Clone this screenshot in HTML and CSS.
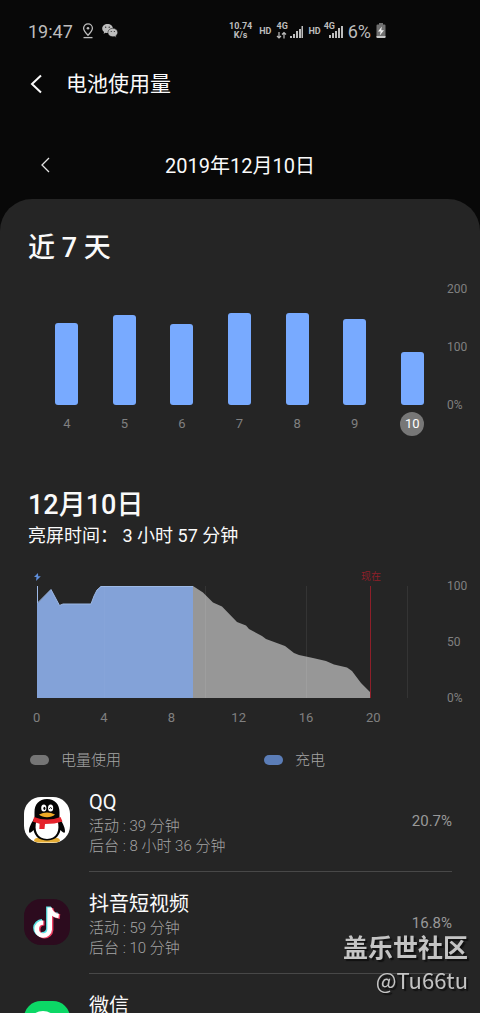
FILE: index.html
```
<!DOCTYPE html>
<html lang="zh-CN">
<head>
    <meta charset="UTF-8">
    <meta name="viewport" content="width=device-width, initial-scale=1.0">
    <title>电池使用量</title>
    <link rel="stylesheet" href="styles.css">
</head>
<body>
    <!-- Status bar -->
    <div class="status-bar">
        <span class="clock">19:47</span>
        <svg class="status-pin" width="12" height="16" viewBox="0 0 12 16" fill="none" stroke="#bdbdbd" stroke-width="1.3">
            <path d="M6 12.2C3.5 9.6 1.6 7.6 1.6 5.2a4.4 4.4 0 0 1 8.8 0c0 2.4-1.9 4.400-4.400 7z"/>
            <circle cx="6" cy="5.200" r="1.300" fill="#bdbdbd" stroke="none"/>
            <path d="M1.500 14.600h9"/>
        </svg>
        <svg class="status-wechat" width="16" height="14" viewBox="0 0 16 14">
            <path fill="#bdbdbd" d="M5.500 0C2.500 0 .2 2 .2 4.500c0 1.400.7 2.600 1.900 3.400L1.600 9.700l2.100-1c.6.200 1.200.2 1.800.2 3 0 5.400-2 5.400-4.500S8.500 0 5.500 0z"/>
            <path fill="#bdbdbd" stroke="#080808" stroke-width=".5" d="M10.800 4.300c-2.800 0-4.900 1.900-4.900 4.200s2.100 4.200 4.900 4.200c.6 0 1.100-.1 1.600-.2l1.900 1-.5-1.700c1.100-.8 1.900-1.900 1.900-3.300 0-2.300-2.200-4.200-4.900-4.200z"/>
            <g fill="#080808"><circle cx="3.700" cy="3.200" r=".6"/><circle cx="7.200" cy="3.200" r=".6"/><circle cx="9.200" cy="7.500" r=".5"/><circle cx="12.300" cy="7.500" r=".5"/></g>
        </svg>
        <div class="status-right">
            <span class="net-speed">10.74<br>K/s</span>
            <span class="hd">HD</span>
            <span class="signal">
                <span class="net-type">4G</span>
                <svg width="27" height="16" viewBox="0 0 27 16" stroke="#bdbdbd" fill="none">
                    <path stroke-width="1.200" d="M3 9v6M1 13l2 2 2-2M8 15.500v-6M6 11.500l2-2 2 2"/>
                    <path stroke-width="2" d="M15 15v-2M18 15v-4M21 15v-7M24 15v-9M26.500 15v-12"/>
                </svg>
            </span>
            <span class="hd">HD</span>
            <span class="signal signal-narrow">
                <span class="net-type">4G</span>
                <svg width="17" height="16" viewBox="0 0 17 16" stroke="#bdbdbd" fill="none" stroke-width="2">
                    <path d="M4 15v-3M7 15v-5M10 15v-7M13 15v-10M16 15v-12"/>
                </svg>
            </span>
            <span class="battery-level">6%</span>
            <svg width="10" height="16" viewBox="0 0 10 16">
                <path fill="#707070" d="M3 0h4v1.500h1.500q1 0 1 1V14q0 1-1 1h-7q-1 0-1-1V2.500q0-1 1-1H3z"/>
                <path fill="#c8c8c8" d="M.5 13h9v1q0 1-1 1h-7q-1 0-1-1z"/>
                <path fill="#f0f0f0" d="M5.800 3.500L2 8.600h2.600l-.8 3.900L8 7.200H5.300z"/>
            </svg>
        </div>
    </div>

    <header class="app-bar">
        <button class="icon-btn" aria-label="返回">
            <svg width="12" height="20" viewBox="0 0 12 20" fill="none" stroke="#fafafa" stroke-width="2"><path d="M11 1.500L2 10l9 8.500"/></svg>
        </button>
        <h1>电池使用量</h1>
    </header>

    <nav class="date-nav">
        <button class="icon-btn" aria-label="前一天">
            <svg width="9" height="16" viewBox="0 0 9 16" fill="none" stroke="#e4e4e4" stroke-width="1.300"><path d="M8 1L1 8l7 7"/></svg>
        </button>
        <span>2019年12月10日</span>
    </nav>

    <main class="card">
        <h2>近 7 天</h2>

        <!-- Last 7 days -->
        <div class="week-chart">
            <div class="days">
                <div class="day"><div class="bar-area"><div class="bar" style="height: 71%"></div></div><span>4</span></div>
                <div class="day"><div class="bar-area"><div class="bar" style="height: 78%"></div></div><span>5</span></div>
                <div class="day"><div class="bar-area"><div class="bar" style="height: 70%"></div></div><span>6</span></div>
                <div class="day"><div class="bar-area"><div class="bar" style="height: 79%"></div></div><span>7</span></div>
                <div class="day"><div class="bar-area"><div class="bar" style="height: 79%"></div></div><span>8</span></div>
                <div class="day"><div class="bar-area"><div class="bar" style="height: 74%"></div></div><span>9</span></div>
                <div class="day selected"><div class="bar-area"><div class="bar" style="height: 46%"></div></div><span>10</span></div>
            </div>
            <div class="y-axis"><span>200</span><span>100</span><span>0%</span></div>
        </div>

        <h2 class="day-title">12月10日</h2>
        <p class="screen-time">亮屏时间： 3 小时 57 分钟</p>

        <!-- Battery level through the day -->
        <div class="level-chart">
            <div class="plot">
                <svg class="area" viewBox="0 0 371 112" preserveAspectRatio="none">
                    <path fill="#83a2d8" d="M0 112V0h1v17L14 3.500l8.500 16L26 18h28l3-8 3-6 4-4h92v112z"/>
                    <path fill="#979797" d="M156 112V0l10 6.500 10 10 9 4L200 36l9 3.500 3 3.500 13 7 4 3 19 7 9 7 5 2 14 3 13 3 8 3.500 13 3 5 3.500 9 12 9 9v6z"/>
                    <path fill="none" stroke="#9db9e6" d="M.5 0v17L14 3.500l8.500 16L26 18h28l3-8 3-6 4-3.500h92"/>
                    <path fill="none" stroke="#fff" stroke-opacity=".03" d="M67.500 0v112"/>
                    <path fill="none" stroke="#fff" stroke-opacity=".07" d="M168.500 0v112M269.500 0v112M370.500 0v112"/>
                    <path fill="none" stroke="#8e1f29" d="M333.500 0v112"/>
                </svg>
                <svg class="bolt" width="7" height="8" viewBox="0 0 7 8"><path fill="#5f8fdc" d="M4 0L0 4h2.500L2 8l4.800-4.700H4.200z"/></svg>
                <span class="now">现在</span>
            </div>
            <div class="y-axis"><span>100</span><span>50</span><span>0%</span></div>
        </div>
        <div class="hours"><span>0</span><span>4</span><span>8</span><span>12</span><span>16</span><span>20</span></div>

        <div class="legend">
            <span class="legend-item"><i class="pill"></i>电量使用</span>
            <span class="legend-item"><i class="pill charging"></i>充电</span>
        </div>

        <!-- App list -->
        <ul class="apps">
            <li>
                <svg class="app-icon" viewBox="0 0 46 46">
                    <rect width="46" height="46" rx="17" fill="#fff"/>
                    <path fill="#e5ad35" d="M10 43.500q0-3 7-3h12q7 0 7 3 0 2-8 2H18q-8 0-8-2z"/>
                    <path fill="#050505" d="M23 2c-8 0-12.500 5.500-12.500 13v6C8 25 5 30 5 34c0 2.500 1.500 2.500 4.500-1C11 40 16 43.500 23 43.500S35 40 36.500 33c3 3.500 4.500 3.500 4.500 1 0-4-3-9-5.500-13v-6C35.500 7.500 31 2 23 2z"/>
                    <path fill="#fff" d="M12.500 24h21c3 9-1 18-10.500 18S9.500 33 12.500 24z"/>
                    <ellipse cx="19.800" cy="11" rx="2.600" ry="3.600" fill="#fff"/><ellipse cx="26.600" cy="11" rx="2.600" ry="3.600" fill="#fff"/>
                    <ellipse cx="20.400" cy="11.300" rx="1" ry="1.600"/><path fill="none" stroke="#000" d="M25.200 11.700q1.400-2.200 2.800 0"/>
                    <path fill="#eeaa26" d="M15 17.500q8-4 16 0-3 2.800-8 2.800t-8-2.800z"/>
                    <path fill="#e5222b" d="M10 20q13 5 26.500 0l2 4.500Q31 27 21 27l-.5 5h-5.200l.3-5.300-6.600-2z"/>
                </svg>
                <div class="app-text">
                    <h3>QQ</h3>
                    <p>活动 : 39 分钟</p>
                    <p>后台 : 8 小时 36 分钟</p>
                </div>
                <span class="percent">20.7%</span>
            </li>
            <li>
                <svg class="app-icon" viewBox="0 0 46 46">
                    <rect width="46" height="46" rx="17" fill="#2c0b1e"/>
                    <g fill="none" stroke-width="4.800">
                        <path stroke="#5be3e5" d="M24.500 7.500v22a6.500 6.500 0 1 1-6.500-7M24.500 8.500c1 4 4 7 9 7.500"/>
                        <path stroke="#ef3f62" d="M27 9v22a6.500 6.500 0 1 1-6.500-7M27 10c1 4 4 7 9 7.500"/>
                        <path stroke="#fff" stroke-width="4.600" d="M25.700 8.500v22a6.500 6.500 0 1 1-6.500-7M25.700 9.500c1 4 4 7 9 7.500"/>
                    </g>
                </svg>
                <div class="app-text">
                    <h3>抖音短视频</h3>
                    <p>活动 : 59 分钟</p>
                    <p>后台 : 10 分钟</p>
                </div>
                <span class="percent">16.8%</span>
            </li>
            <li>
                <svg class="app-icon" viewBox="0 0 46 46">
                    <rect width="46" height="46" rx="17" fill="#0cd866"/>
                    <ellipse cx="19" cy="19" rx="12" ry="9" fill="#fff"/>
                    <ellipse cx="29" cy="27" rx="10" ry="8" fill="#fff"/>
                </svg>
                <div class="app-text">
                    <h3>微信</h3>
                </div>
            </li>
        </ul>
    </main>

    <div class="watermark"><strong>盖乐世社区</strong><span>@Tu66tu</span></div>
</body>
</html>
```
FILE: styles.css
```
* {
    box-sizing: border-box;
}
body {
    margin: 0;
    height: 100vh;
    overflow: hidden;
    display: flex;
    flex-direction: column;
    background-color: #080808;
    color: #fafafa;
    font-family: Roboto, "Noto Sans CJK SC", sans-serif;
}
h1, h2, h3, p, ul {
    margin: 0;
    padding: 0;
    font-weight: 400;
}
svg {
    display: block;
    flex: none;
}
.status-bar {
    flex: none;
    display: flex;
    align-items: center;
    height: 62px;
    padding: 0 94px 0 28px;
    color: #bdbdbd;
}
.clock, .battery-level {
    font-size: 18px;
}
.status-pin {
    margin-left: 9px;
}
.status-wechat {
    margin-left: 8px;
}
.status-right {
    display: flex;
    align-items: center;
    gap: 5px;
    margin-left: auto;
}
.net-speed {
    margin-right: 2px;
    font-size: 9px;
    line-height: 9px;
    font-weight: 700;
    text-align: center;
}
.hd {
    font-size: 9px;
    font-weight: 700;
}
.signal {
    position: relative;
}
.net-type {
    position: absolute;
    top: -2px;
    left: 0;
    font-size: 9px;
    line-height: 10px;
    font-weight: 700;
}
.signal-narrow .net-type {
    left: -2px;
}
.app-bar {
    flex: none;
    display: flex;
    align-items: center;
    gap: 24px;
    height: 44px;
    padding-left: 30px;
}
.app-bar h1 {
    font-size: 21px;
    line-height: 24px;
}
.icon-btn {
    padding: 0;
    border: none;
    background: none;
    cursor: pointer;
}
.date-nav {
    flex: none;
    display: grid;
    grid-template-columns: 60px 1fr 60px;
    align-items: center;
    height: 69px;
    margin-top: 24px;
    font-size: 20px;
    text-align: center;
}
.date-nav .icon-btn {
    justify-self: end;
    margin-right: 10px;
}
.card {
    flex: 1 0 auto;
    padding-top: 30px;
    border-radius: 32px 32px 0 0;
    background-color: #252525;
}
.card h2 {
    padding-left: 28px;
    font-size: 27px;
    line-height: 38px;
    font-weight: 500;
}
.week-chart {
    display: flex;
    margin-top: 22px;
}
.days {
    flex: 1;
    display: flex;
    padding: 0 6px 0 38px;
}
.day {
    flex: 1;
    display: flex;
    flex-direction: column;
    align-items: center;
    gap: 7px;
    color: #808080;
    font-size: 13px;
    line-height: 24px;
}
.bar-area {
    display: flex;
    align-items: flex-end;
    height: 116px;
}
.bar {
    width: 23px;
    border-radius: 3px;
    background-color: #78aaff;
}
.day span {
    width: 24px;
    border-radius: 50%;
    text-align: center;
}
.day.selected span {
    background-color: #777;
    color: #fff;
}
.y-axis {
    flex: none;
    display: flex;
    flex-direction: column;
    justify-content: space-between;
    width: 33px;
    height: 132px;
    margin: -8px 0;
    color: #808080;
    font-size: 12px;
    line-height: 16px;
}
.card .day-title {
    margin-top: 50px;
}
.screen-time {
    padding-left: 28px;
    font-size: 18px;
    line-height: 24px;
}
.level-chart {
    display: flex;
    margin-top: 38px;
}
.level-chart .y-axis {
    height: 128px;
}
.plot {
    position: relative;
    flex: 1;
    height: 112px;
    margin: 0 39px 0 37px;
}
.area {
    width: 100%;
    height: 100%;
}
.bolt {
    position: absolute;
    top: -13px;
    left: -3px;
}
.now {
    position: absolute;
    top: -16px;
    left: 90%;
    transform: translateX(-50%);
    color: #8e1f29;
    font-size: 10px;
    line-height: 14px;
}
.hours {
    display: flex;
    margin-top: 10px;
    padding: 0 73px 0 3px;
    color: #808080;
    font-size: 13px;
    line-height: 20px;
    text-align: center;
}
.hours span {
    flex: 1;
}
.legend {
    display: flex;
    margin-top: 22px;
    padding-left: 30px;
    color: #a4a4a4;
    font-size: 15px;
    font-weight: 300;
    line-height: 20px;
}
.legend-item {
    flex: none;
    display: flex;
    align-items: center;
    gap: 12px;
    width: 52%;
}
.legend-item:last-child {
    width: auto;
}
.pill {
    width: 19px;
    height: 10px;
    border-radius: 5px;
    background-color: #757575;
}
.pill.charging {
    background-color: #5b7db7;
}
.apps {
    list-style: none;
}
.apps li {
    display: flex;
    align-items: flex-start;
    padding: 0 28px 0 24px;
}
.app-icon {
    width: 46px;
    height: 46px;
    margin: 27px 19px 0 0;
}
.app-text {
    flex: 1;
    padding: 18px 0 15px;
    border-bottom: 1px solid #484848;
}
.app-text h3 {
    font-size: 20px;
    line-height: 28px;
}
.app-text p {
    color: #a4a4a4;
    font-size: 15px;
    font-weight: 300;
    line-height: 20px;
}
.percent {
    align-self: stretch;
    padding-top: 41px;
    border-bottom: 1px solid #484848;
    color: #999;
    font-size: 15px;
    line-height: 20px;
}
.watermark {
    position: fixed;
    right: 12px;
    bottom: 17px;
    display: flex;
    flex-direction: column;
    align-items: flex-end;
    color: #c4c4c4;
    font-family: "Noto Sans CJK SC", sans-serif;
    font-size: 22px;
    line-height: 33px;
    text-shadow: 2px 2px 1px #111;
}
.watermark strong {
    font-size: 25px;
}
```
